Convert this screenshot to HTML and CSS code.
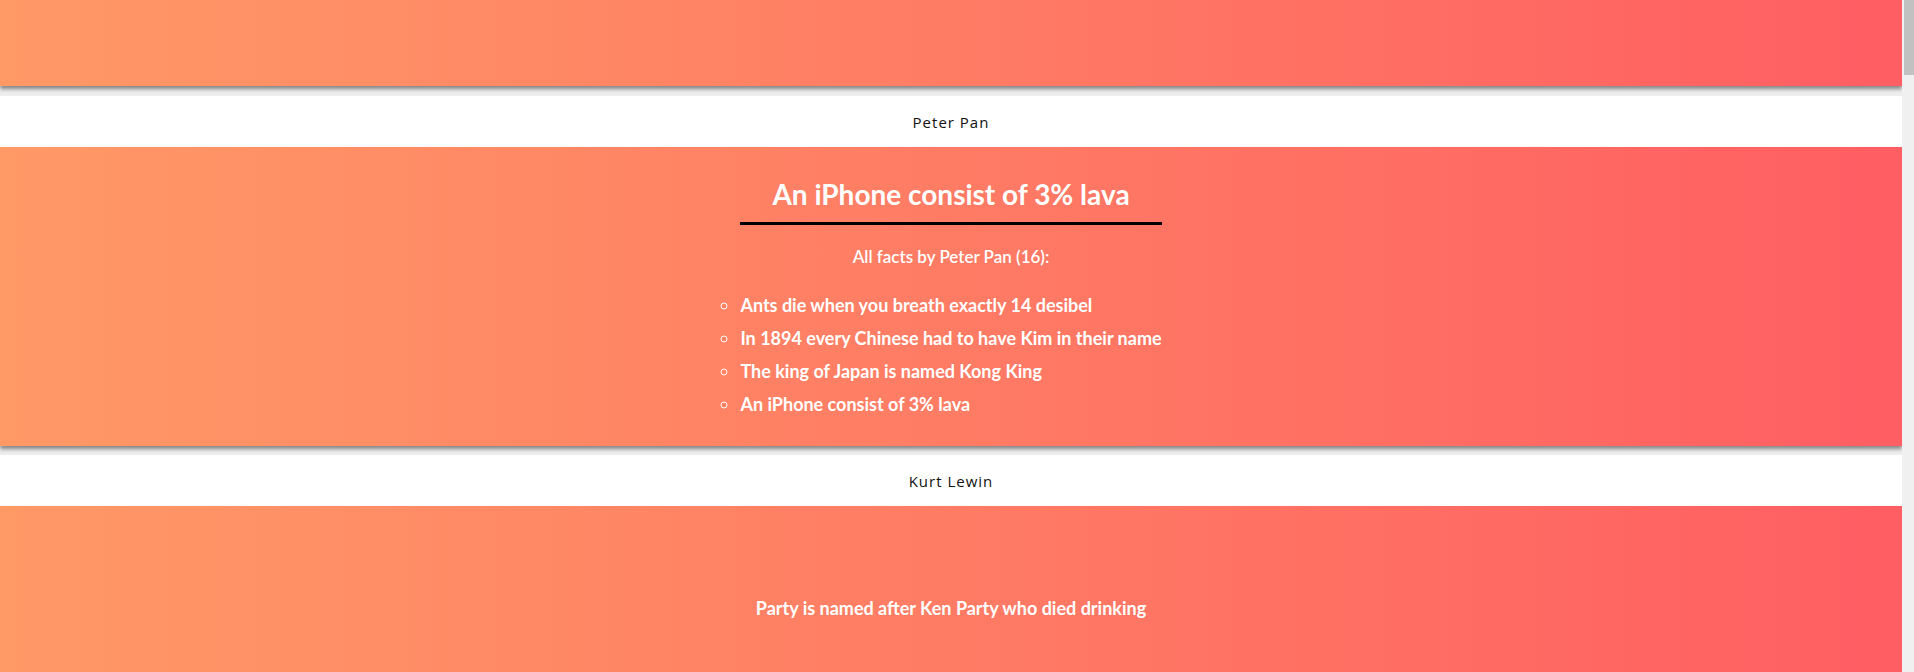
FILE: index.html
```html
<!DOCTYPE html>
<html lang="en">
<head>
<meta charset="utf-8">
<title>Facts</title>
<link rel="stylesheet" href="styles.css">
</head>
<body>
<div class="viewport">
  <div class="feed">
    <header class="card card-header"></header>

    <div class="author">Peter Pan</div>
    <section class="card">
      <div class="fact">
        <h2 class="fact-title">An iPhone consist of 3% lava</h2>
        <p class="fact-sub">All facts by Peter Pan (16):</p>
        <ul class="fact-list">
          <li>Ants die when you breath exactly 14 desibel</li>
          <li>In 1894 every Chinese had to have Kim in their name</li>
          <li>The king of Japan is named Kong King</li>
          <li>An iPhone consist of 3% lava</li>
        </ul>
      </div>
    </section>

    <div class="author">Kurt Lewin</div>
    <section class="card card-plain">
      <p class="fact-text">Party is named after Ken Party who died drinking</p>
    </section>
  </div>
</div>
<div class="rail" aria-hidden="true"><div class="rail-thumb"></div></div>
</body>
</html>
```
FILE: styles.css
```css
html, body {
  margin: 0;
  padding: 0;
  height: 100%;
  overflow: hidden;
}

body {
  display: flex;
  background: #eeeeee;
  font-family: "Lato", "Open Sans", sans-serif;
  color: #ffffff;
}

.viewport {
  flex: 1;
  min-width: 0;
  height: 100vh;
  overflow: hidden;
}

.rail {
  width: 12px;
  flex-shrink: 0;
  background: #f0f0f0;
  display: flex;
  justify-content: flex-end;
}

.rail-thumb {
  width: 10px;
  height: 75px;
  background: #c1c1c1;
}

.feed {
  display: flex;
  flex-direction: column;
  min-height: 6000px;
}

.card {
  background: linear-gradient(to right, #ff9966, #ff5e62);
  box-shadow: 0 3px 4px rgba(0, 0, 0, 0.45);
  position: relative;
  z-index: 1;
  display: flex;
  flex-direction: column;
  align-items: center;
  margin-bottom: 9px;
}

.card-header {
  height: 86px;
  margin-bottom: 10px;
}

.author {
  background: #ffffff;
  height: 51px;
  display: flex;
  align-items: center;
  justify-content: center;
  color: #111111;
  font-family: "Open Sans", sans-serif;
  font-size: 15px;
  letter-spacing: 1px;
}

.fact {
  width: fit-content;
  display: flex;
  flex-direction: column;
  align-items: stretch;
  padding: 32px 0 25px;
}

.fact-title {
  margin: 0;
  font-size: 28px;
  line-height: 31px;
  font-weight: 700;
  text-align: center;
  padding-bottom: 12px;
  border-bottom: 3px solid #000000;
}

.fact-sub {
  margin: 20px 0 21px;
  font-size: 17px;
  font-weight: 600;
  line-height: 23px;
  text-align: center;
}

.fact-list {
  margin: 0;
  padding: 0;
  list-style: circle;
  font-size: 18px;
  font-weight: 700;
  line-height: 33px;
}

.card-plain {
  padding: 90px 0 200px;
  flex-grow: 1;
  margin-bottom: 0;
}

.fact-text {
  margin: 0;
  font-size: 18px;
  font-weight: 700;
  line-height: 24px;
}
```
